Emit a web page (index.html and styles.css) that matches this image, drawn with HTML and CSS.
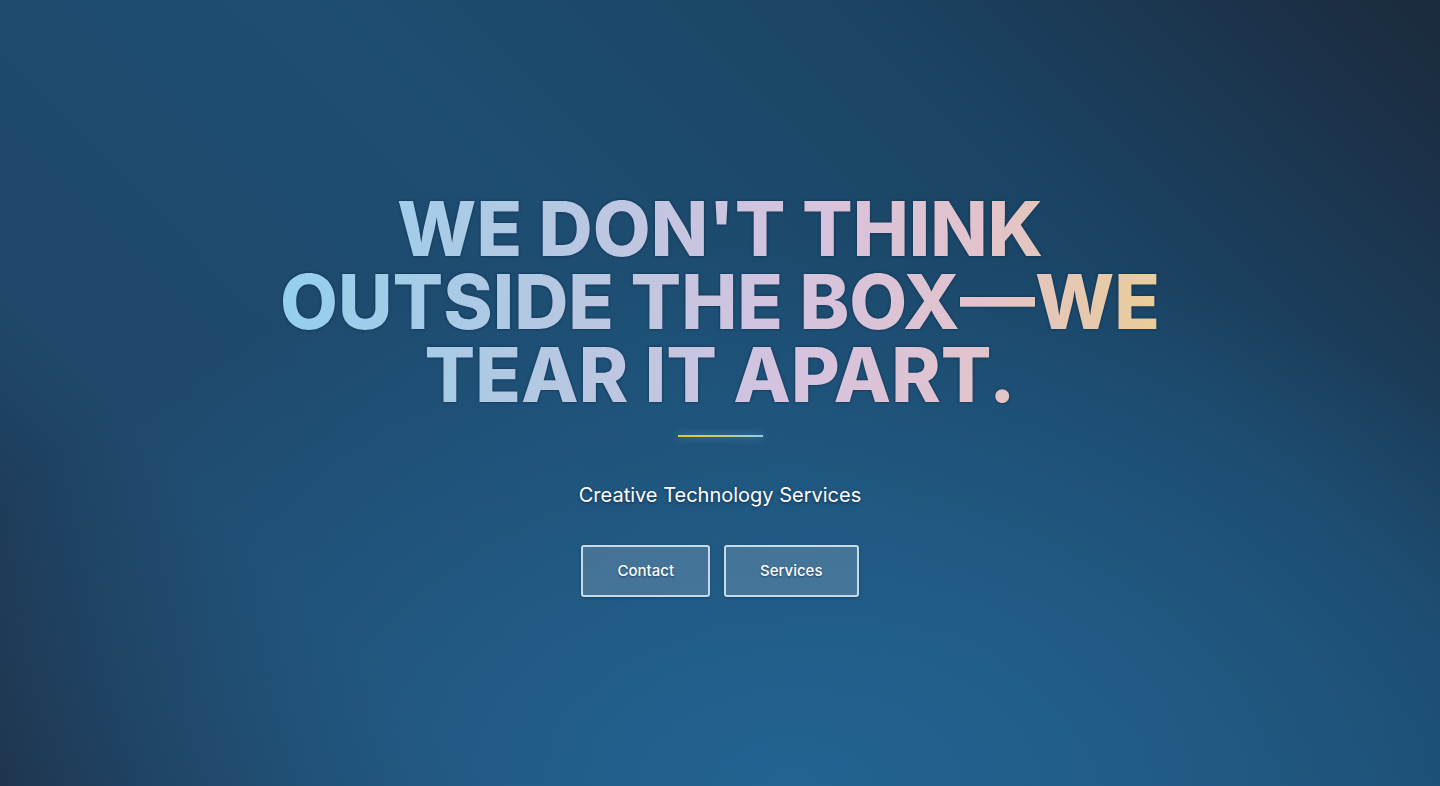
FILE: index.html
```html
<!DOCTYPE html>
<html lang="en">
<head>
<meta charset="utf-8">
<title>Creative Technology Services</title>
<link rel="stylesheet" href="styles.css">
</head>
<body>
<main class="hero">
  <div class="hero-inner">
    <h1 class="headline">WE DON'T THINK<br>OUTSIDE THE BOX—WE<br>TEAR IT APART.</h1>
    <div class="divider"></div>
    <p class="tagline">Creative Technology Services</p>
    <div class="actions">
      <a class="btn" href="#contact">Contact</a>
      <a class="btn" href="#services">Services</a>
    </div>
  </div>
</main>
</body>
</html>
```
FILE: styles.css
```css
html, body {
  margin: 0;
  padding: 0;
  height: 100%;
}
body {
  font-family: "Inter", "DejaVu Sans", sans-serif;
  color: #fff;
  background: #1f4f74;
}
.hero {
  min-height: 100vh;
  display: flex;
  align-items: center;
  justify-content: center;
  background:
    radial-gradient(ellipse 65% 70% at 55% 100%, rgba(35, 101, 148, 0.95) 0%, rgba(35, 101, 148, 0.6) 40%, rgba(35, 101, 148, 0) 100%),
    linear-gradient(45deg, #1e2c41 0%, #1f486b 22%, #1d4d71 50%, #1b4566 72%, #1b2a3c 100%);
}
.hero-inner {
  display: flex;
  flex-direction: column;
  align-items: center;
  text-align: center;
  padding-top: 2px;
}
.headline {
  margin: 0;
  font-family: "Inter", sans-serif;
  font-weight: 800;
  font-size: 75px;
  line-height: 73px;
  letter-spacing: 0;
  background: linear-gradient(90deg, #93d0ee 0%, #b4c8e2 30%, #d5c3df 58%, #e2c3cc 80%, #e9cd98 100%);
  -webkit-background-clip: text;
  background-clip: text;
  color: transparent;
  filter: drop-shadow(0 0 1.5px rgba(10, 40, 70, 0.9));
}
.divider {
  width: 85px;
  height: 2px;
  margin-top: 24px;
  background: linear-gradient(90deg, #e6c81e 0%, #cfd060 40%, #8fcfee 100%);
  box-shadow: 0 0 8px rgba(150, 210, 240, 0.5);
}
.tagline {
  margin: 46px 0 0;
  font-family: "Inter", sans-serif;
  font-size: 20px;
  line-height: 24px;
  color: #fff;
  text-shadow: 0 1px 3px rgba(0, 20, 50, 0.6);
}
.actions {
  display: flex;
  gap: 14px;
  margin-top: 38px;
}
.btn {
  display: inline-flex;
  align-items: center;
  justify-content: center;
  height: 48px;
  padding: 0 34px;
  border: 2px solid rgba(225, 235, 245, 0.85);
  border-radius: 3px;
  background: rgba(255, 255, 255, 0.16);
  color: #fff;
  font-family: "Inter", sans-serif;
  font-size: 15px;
  font-weight: 500;
  text-decoration: none;
  text-shadow: 0 1px 2px rgba(0, 20, 50, 0.5);
  box-shadow: 0 1px 3px rgba(0, 20, 50, 0.3);
}
```
